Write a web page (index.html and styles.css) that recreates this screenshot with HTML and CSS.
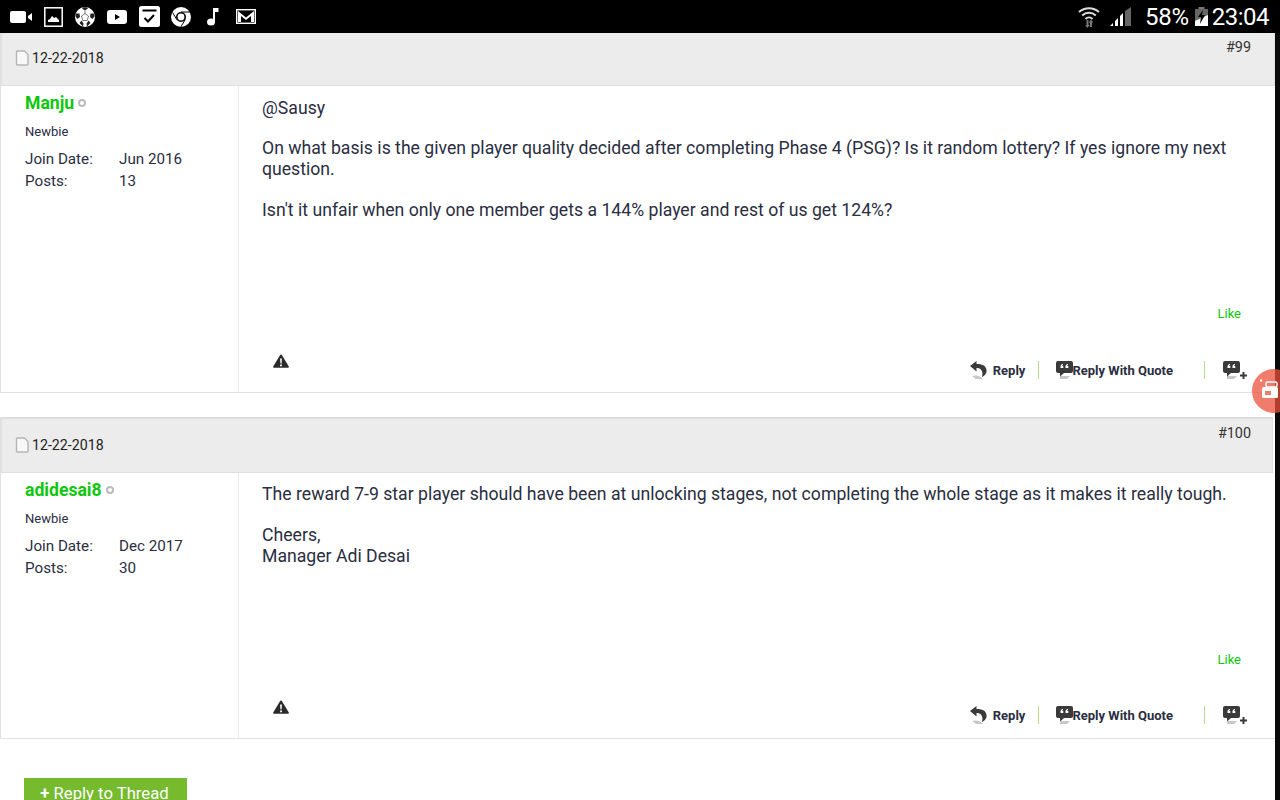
FILE: index.html
```html
<!DOCTYPE html>
<html lang="en">
<head>
    <meta charset="UTF-8">
    <title>Thread</title>
    <link rel="stylesheet" href="styles.css">
</head>
<body>
    <svg class="sprites" width="0" height="0">
        <symbol id="doc" viewBox="0 0 14 16"><path d="M2.500 1h7l3.500 3.500V14a1 1 0 0 1-1 1H2.500a1 1 0 0 1-1-1V2a1 1 0 0 1 1-1z" fill="#f8f8f8" stroke="#b5b5b5" stroke-width="1.400"/></symbol>
        <symbol id="warn" viewBox="0 0 16 14"><path d="M8 .5c.5 0 .8.300 1 .7l6.800 11.300c.3.600 0 1.300-.8 1.300H1c-.8 0-1.100-.7-.8-1.300L7 1.200c.2-.4.500-.7 1-.7z" fill="#2b2b2b"/><path d="M7.100 4.500h1.800l-.3 5H7.400zM7.100 10.500h1.800v1.800H7.100z" fill="#fff"/></symbol>
        <symbol id="reply" viewBox="0 0 18 18"><path d="M2 15c4-1.500 9 0 11 3H6z" fill="#c8c8c8"/><path d="M6.500 0 0 5l6.500 5.500V7c3.500 0 5.500 1.500 6 5.500l-.5 3.500c3-1.500 5-4 4.500-7C16 4.500 12 3 6.500 3z" fill="#3a3a3a"/></symbol>
        <symbol id="quote" viewBox="0 0 17 18"><path d="M4 15h10l-3 3H4z" fill="#c8c8c8"/><path d="M2 0h13a2 2 0 0 1 2 2v8a2 2 0 0 1-2 2H8l-4 3.500V12H2a2 2 0 0 1-2-2V2a2 2 0 0 1 2-2z" fill="#3a3a3a"/><path d="M4.500 7V5.500C4.500 4 5.500 3 7 3v1.200c-.5 0-1 .3-1 .8h1.300v2zM9.500 7V5.500C9.500 4 10.500 3 12 3v1.200c-.5 0-1 .3-1 .8h1.300v2z" fill="#fff"/></symbol>
        <symbol id="plus" viewBox="0 0 7 7"><path d="M2.500 0h2v2.500H7v2H4.500V7h-2V4.500H0v-2h2.500z" fill="#3a3a3a"/></symbol>
    </svg>

    <div class="status-bar">
        <div class="status-icons">
            <svg class="si-video" width="23" height="14" viewBox="0 0 23 14"><rect y="1" width="16" height="12" rx="2" fill="#fff"/><path d="M18 6l4-3v8l-4-3z" fill="#fff"/></svg>
            <svg class="si-photo" width="19" height="20" viewBox="0 0 19 20"><rect x=".8" y=".8" width="17.400" height="18.400" fill="none" stroke="#fff" stroke-width="1.500"/><path d="M4 15v-2l2-1 2-3 2 2 2-1 3 3v2z" fill="#fff"/></svg>
            <svg class="si-ball" width="20" height="20" viewBox="0 0 20 20"><circle cx="10" cy="10" r="10" fill="#fff"/><path d="M7 1.500 10 3.500 13 1.500 11.500 .3H8.500zM1 6.500l3.500 0L5 10l-2.500 2L.5 9.500zM19 6.500l-3.500 0L15 10l2.500 2 2-2.500zM4.500 16l2-2.500 2 3-.5 3zM15.500 16l-2-2.500-2 3 .5 3z" fill="#222"/><path d="M10 3.500V6.500M10 6.500 6.500 9M10 6.500 13.500 9M6.500 9 7.800 13.500H12.200L13.500 9" fill="none" stroke="#222" stroke-width=".6"/></svg>
            <svg class="si-play" width="20" height="14" viewBox="0 0 20 14"><rect width="20" height="14" rx="3" fill="#fff"/><path d="M8 4l5 3-5 3z" fill="#000"/></svg>
            <svg class="si-task" width="21" height="21" viewBox="0 0 21 21"><rect width="21" height="21" rx="2.500" fill="#fff"/><rect x="3.500" y="3.500" width="14" height="2" fill="#000"/><path d="M5.500 12l3.500 3.500 6-6.500" fill="none" stroke="#000" stroke-width="2"/></svg>
            <svg class="si-chrome" width="20" height="20" viewBox="0 0 20 20"><circle cx="10" cy="10" r="10" fill="#fff"/><circle cx="10" cy="10" r="5" fill="#000"/><circle cx="10" cy="10" r="3.400" fill="#fff"/><path d="M10 5h9M5.700 12.500 1.500 5.300M14.300 12.500l-4.500 7.500" stroke="#000" stroke-width="1"/></svg>
            <svg class="si-note" width="12" height="19" viewBox="0 0 12 19"><ellipse cx="4" cy="15" rx="4" ry="3.500" fill="#fff"/><rect x="6" y="1" width="2" height="14" fill="#fff"/><path d="M6 1h5.500v4H6z" fill="#fff"/></svg>
            <svg class="si-mail" width="20" height="15" viewBox="0 0 20 15"><rect x=".7" y=".7" width="18.600" height="13.600" fill="#000" stroke="#fff" stroke-width="1.400"/><path d="M2 2l8 6.500L18 2v11h-3V7l-5 4-5-4v6H2z" fill="#fff"/></svg>
        </div>
        <div class="status-right">
            <svg class="si-wifi" width="22" height="22" viewBox="0 0 22 22"><path d="M1 6a15 15 0 0 1 20 0" fill="none" stroke="#ddd" stroke-width="2"/><path d="M4.200 9.500a10 10 0 0 1 13.600 0" fill="none" stroke="#ddd" stroke-width="2"/><path d="M7.500 13a5 5 0 0 1 7 0" fill="none" stroke="#ddd" stroke-width="2"/><path d="M8.500 14h2v5h1.300L9.500 22 7.200 19h1.300zM13 13.500l2.300 3H14v4.500h-2v-4.500h-1.300z" fill="#777"/></svg>
            <svg class="si-signal" width="22" height="19" viewBox="0 0 22 19"><path d="M0 19l3-3v3zM5 19v-5l3-3v8zM10 19V9l3-3v13z" fill="#fff"/><path d="M15 19V4l6-4v19z" fill="#666"/></svg>
            <span class="battery-pct">58%</span>
            <svg class="si-batt" width="13" height="19" viewBox="0 0 13 19"><rect x="3.500" width="6" height="2" fill="#777"/><rect y="2" width="13" height="17" fill="#fff"/><path d="M0 2h13v6L0 14z" fill="#666"/><path d="M8 3 3 10h3l-1 7 5-9H7z" fill="#000"/></svg>
            <span class="clock">23:04</span>
        </div>
    </div>

    <div class="page">
        <div class="post post-first">
            <div class="post-head">
                <div class="post-date"><svg class="doc" width="14" height="16"><use href="#doc"/></svg>12-22-2018</div>
                <a class="post-num">#99</a>
            </div>
            <div class="post-main">
                <div class="user-col">
                    <div class="username">Manju<span class="offline"></span></div>
                    <div class="user-title">Newbie</div>
                    <dl class="user-info">
                        <dt>Join Date:</dt><dd>Jun 2016</dd>
                        <dt>Posts:</dt><dd>13</dd>
                    </dl>
                </div>
                <div class="post-col">
                    <div class="post-text">
                        <p>@Sausy</p>
                        <p>On what basis is the given player quality decided after completing Phase 4 (PSG)? Is it random lottery? If yes ignore my next question.</p>
                        <p>Isn't it unfair when only one member gets a 144% player and rest of us get 124%?</p>
                    </div>
                    <div class="like-row"><a class="like">Like</a></div>
                    <div class="post-actions">
                        <svg class="warn" width="16" height="14"><use href="#warn"/></svg>
                        <div class="action-links">
                            <a class="action action-reply"><svg width="18" height="18"><use href="#reply"/></svg>Reply</a>
                            <a class="action action-quote"><svg width="17" height="18"><use href="#quote"/></svg>Reply With Quote</a>
                            <a class="action action-multi"><svg width="17" height="18"><use href="#quote"/></svg><svg class="plus" width="7" height="7"><use href="#plus"/></svg></a>
                        </div>
                    </div>
                </div>
            </div>
        </div>

        <div class="post post-second">
            <div class="post-head">
                <div class="post-date"><svg class="doc" width="14" height="16"><use href="#doc"/></svg>12-22-2018</div>
                <a class="post-num">#100</a>
            </div>
            <div class="post-main">
                <div class="user-col">
                    <div class="username">adidesai8<span class="offline"></span></div>
                    <div class="user-title">Newbie</div>
                    <dl class="user-info">
                        <dt>Join Date:</dt><dd>Dec 2017</dd>
                        <dt>Posts:</dt><dd>30</dd>
                    </dl>
                </div>
                <div class="post-col">
                    <div class="post-text">
                        <p>The reward 7-9 star player should have been at unlocking stages, not completing the whole stage as it makes it really tough.</p>
                        <p>Cheers,<br>Manager Adi Desai</p>
                    </div>
                    <div class="like-row"><a class="like">Like</a></div>
                    <div class="post-actions">
                        <svg class="warn" width="16" height="14"><use href="#warn"/></svg>
                        <div class="action-links">
                            <a class="action action-reply"><svg width="18" height="18"><use href="#reply"/></svg>Reply</a>
                            <a class="action action-quote"><svg width="17" height="18"><use href="#quote"/></svg>Reply With Quote</a>
                            <a class="action action-multi"><svg width="17" height="18"><use href="#quote"/></svg><svg class="plus" width="7" height="7"><use href="#plus"/></svg></a>
                        </div>
                    </div>
                </div>
            </div>
        </div>

        <div class="reply-wrap"><a class="reply-btn"><b>+</b> Reply to Thread</a></div>
    </div>

    <div class="float-bubble">
        <svg width="18" height="20" viewBox="0 0 18 20"><circle cx="1" cy="1.500" r="1.300" fill="#fff"/><rect x="6" y="3" width="11" height="5" rx="1.500" fill="none" stroke="#fff" stroke-width="1.500"/><rect x="2" y="8" width="16" height="11" rx="1.500" fill="#fff"/><rect x="5" y="12" width="6" height="4" fill="#f07c6c"/></svg>
    </div>
</body>
</html>
```

FILE: styles.css
```css
* {
    box-sizing: border-box;
}

html, body {
    height: 800px;
    overflow: hidden;
}

body {
    margin: 0;
    font-family: Roboto, sans-serif;
    color: #2a2e3f;
    background: #fff;
}

.sprites {
    display: none;
}

.status-bar {
    height: 33px;
    background: #000;
    display: flex;
    justify-content: space-between;
    align-items: center;
    padding: 0 11px 0 10px;
}

.status-icons {
    display: flex;
    align-items: center;
}

.si-photo { margin-left: 11px; }
.si-ball { margin-left: 12px; }
.si-play { margin-left: 12px; }
.si-task { margin-left: 12px; }
.si-chrome { margin-left: 11px; }
.si-note { margin-left: 16px; }
.si-mail { margin-left: 17px; }

.status-right {
    display: flex;
    align-items: center;
    color: #fff;
}

.si-signal {
    margin-left: 10px;
}

.battery-pct {
    font-size: 24px;
    margin: 0 6px 0 13px;
    letter-spacing: -.3px;
}

.clock {
    font-size: 24px;
    margin-left: 4px;
    letter-spacing: -.5px;
}

.page {
    border-right: 5px solid #0a0a0a;
    height: 767px;
}

.post-second {
    margin-top: 24px;
}

.post-head {
    height: 53px;
    background: #ececec;
    border: 1px solid #e0e0e0;
    border-left-width: 2px;
    border-top: 0;
    display: flex;
    justify-content: space-between;
    padding: 0 23px 0 13px;
}

.post-second .post-head {
    height: 56px;
    margin-right: 2px;
    padding-right: 21px;
    border-top: 2px solid #ddd;
}

.post-date {
    display: flex;
    align-items: center;
    gap: 3px;
    font-size: 14.2px;
    color: #222;
    padding-bottom: 3px;
}

.post-second .post-date {
    padding-bottom: 1px;
}

.post-num {
    font-size: 14.4px;
    color: #333;
    padding-top: 6px;
}

.post-main {
    display: flex;
    height: 307px;
    border: 1px solid #e2e2e2;
    border-top: 0;
    border-right: 0;
}

.post-second .post-main {
    height: 266px;
}

.user-col {
    width: 238px;
    padding: 5px 0 0 24px;
    border-right: 1px solid #ececec;
    flex-shrink: 0;
}

.username {
    font-size: 17.6px;
    font-weight: 700;
    color: #0dc70d;
    line-height: 24px;
    display: flex;
    align-items: center;
}

.offline {
    width: 8px;
    height: 8px;
    margin-left: 4px;
    border-radius: 50%;
    border: 2px solid #bbb;
}

.user-title {
    font-size: 13px;
    line-height: 16px;
    margin-top: 9px;
}

.user-info {
    display: grid;
    grid-template-columns: 94px 1fr;
    font-size: 15.2px;
    line-height: 22px;
    margin: 8px 0 0;
}

.user-info dd {
    margin: 0;
}

.post-col {
    flex: 1;
    display: flex;
    flex-direction: column;
    padding: 0 26px 0 23px;
}

.post-text {
    font-size: 17.65px;
    line-height: 21px;
    padding-top: 12px;
    height: 216px;
}

.post-second .post-text {
    padding-top: 11px;
    height: 176px;
}

.post-text p {
    margin: 0 0 20px;
}

.post-first .post-text p:first-child {
    margin-bottom: 19px;
}

.like-row {
    text-align: right;
    padding-right: 8px;
    height: 30px;
}

.post-first .like-row {
    padding-top: 1px;
}

.like {
    font-size: 13px;
    color: #0dc70d;
}

.post-actions {
    display: flex;
    justify-content: space-between;
    align-items: flex-start;
    padding: 0 2px 0 11px;
    margin-top: 4px;
}

.post-second .post-actions {
    margin-top: 3px;
}

.warn {
    margin-top: 18px;
}

.action-links {
    display: flex;
    align-items: center;
    margin-top: 25px;
}

.post-second .action-links {
    margin-top: 24px;
}

.action {
    display: flex;
    align-items: center;
    height: 18px;
    font-size: 13px;
    font-weight: 700;
}

.action-reply {
    gap: 5px;
    padding-right: 13px;
    border-right: 1px solid #b5dc8a;
}

.action-quote {
    padding: 0 31px 0 17px;
    border-right: 1px solid #b5dc8a;
}

.action-quote svg {
    margin-right: -1px;
}

.action-multi {
    padding-left: 18px;
    align-items: flex-end;
}

.reply-wrap {
    padding: 39px 0 0 24px;
}

.reply-btn {
    display: inline-block;
    width: 163px;
    height: 40px;
    background: #76bb2e;
    color: #fff;
    font-size: 16.7px;
    text-align: center;
    padding: 6px 2px 0 0;
}

.float-bubble {
    position: absolute;
    left: 1252px;
    top: 369px;
    width: 44px;
    height: 44px;
    border-radius: 50%;
    background: rgba(235, 80, 59, .75);
    display: flex;
    align-items: center;
    padding: 0 0 4px 8px;
}
```
